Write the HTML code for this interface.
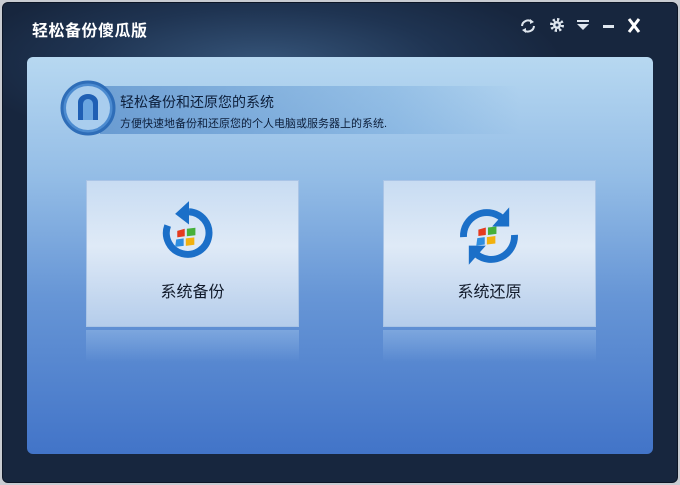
<!DOCTYPE html>
<html><head><meta charset="utf-8"><style>
*{margin:0;padding:0;box-sizing:border-box}
body{width:680px;height:485px;background:#c9ccd2;font-family:"Liberation Sans","Noto Sans CJK SC",sans-serif;overflow:hidden;position:relative}
.win{position:absolute;left:2px;top:2px;width:676px;height:481px;border-radius:6px;background:radial-gradient(ellipse 300px 90px at 260px 60px,#36557a 0%,#1f3452 60%,#17263e 100%);border:1px solid #0d1626}
.title{position:absolute;left:32px;top:17px;color:#fff;font-size:16px;font-weight:bold;letter-spacing:0.5px}
.panel{position:absolute;left:27px;top:57px;width:626px;height:397px;border-radius:6px;background:linear-gradient(#b7d8f1 0%,#94bde6 30%,#6796d6 60%,#4274c8 100%)}
.band{position:absolute;left:100px;top:86px;width:420px;height:48px;background:linear-gradient(90deg,rgba(60,120,190,.55),rgba(90,150,210,.3) 70%,rgba(150,200,240,0))}
.h1{position:absolute;left:120px;top:92px;font-size:14px;color:#0c1e3a}
.h2{position:absolute;left:120px;top:115px;font-size:11px;color:#0c1e3a}
.card{position:absolute;top:180px;width:213px;height:147px;border:1px solid #a9c4e6;background:linear-gradient(#c8dcf2,#dfeaf7 45%,#b5cdeb 100%)}
.card span{position:absolute;left:0;right:0;top:97px;text-align:center;font-size:16px;color:#111a2a}
.refl{position:absolute;top:330px;width:213px;height:32px;background:linear-gradient(rgba(160,195,235,.45),rgba(160,195,235,0))}
</style></head><body>
<div class="win"></div>
<div class="title">轻松备份傻瓜版</div>
<svg style="position:absolute;left:518px;top:15px" width="130" height="22" viewBox="0 0 130 22">
<g fill="none" stroke="#dfe6ee" stroke-width="2"><path d="M4 11a6 6 0 0 1 10-4"/><path d="M16 11a6 6 0 0 1-10 4"/></g>
<path d="M12 4l4 3-4 2z M8 18l-4-3 4-2z" fill="#dfe6ee"/>
<circle cx="39" cy="10" r="5.5" fill="none" stroke="#dfe6ee" stroke-width="3" stroke-dasharray="2.2 2.1"/>
<circle cx="39" cy="10" r="4" fill="#dfe6ee"/><circle cx="39" cy="10" r="1.5" fill="#223553"/>
<rect x="59" y="5" width="12" height="2" fill="#dfe6ee"/><path d="M59 9h12l-6 6z" fill="#dfe6ee"/>
<rect x="85" y="10" width="11" height="3" fill="#dfe6ee"/>
<path d="M111 4l10 13M121 4l-10 13" stroke="#fff" stroke-width="3"/>
</svg>
<div class="panel"></div>
<div class="band"></div>
<svg style="position:absolute;left:60px;top:80px" width="58" height="58">
<circle cx="28" cy="28" r="26" fill="#4c8bd0" stroke="#2e6db8" stroke-width="3"/>
<circle cx="28" cy="28" r="22" fill="#a9cdee"/>
<path d="M18 40V22a10 8 0 0 1 20 0v18z" fill="#1f5fb4"/>
<path d="M23 40V24a5 5 0 0 1 10 0v16z" fill="#6aa5e0"/>
</svg>
<div class="h1">轻松备份和还原您的系统</div>
<div class="h2">方便快速地备份和还原您的个人电脑或服务器上的系统.</div>
<div class="card" style="left:86px"><span>系统备份</span></div>
<div class="card" style="left:383px"><span>系统还原</span></div>
<div class="refl" style="left:86px"></div>
<div class="refl" style="left:383px"></div>
<svg style="position:absolute;left:158px;top:200px" width="62" height="64" viewBox="0 0 58 60">
<path d="M9 24a20 20 0 1 0 20-13" fill="none" stroke="#1b6fc8" stroke-width="6.5"/>
<path d="M29 1l-13 12 13 10z" fill="#1b6fc8"/>
<path d="M18 29l7-2v7l-7 1z" fill="#e53a1e"/><path d="M27 27l8-1v7l-8 1z" fill="#46b03a"/>
<path d="M17 37l7-1v7l-8 1z" fill="#2e8ee0"/><path d="M26 36l8-1v7l-8 1z" fill="#f2b10f"/>
</svg>
<svg style="position:absolute;left:455px;top:203px" width="68" height="66" viewBox="0 0 64 62">
<path d="M8 32a22 22 0 0 1 36-18" fill="none" stroke="#1b6fc8" stroke-width="6.5"/>
<path d="M51 4v18h-16z" fill="#1b6fc8"/>
<path d="M56 30a22 22 0 0 1-36 18" fill="none" stroke="#1b6fc8" stroke-width="6.5"/>
<path d="M13 58v-18h16z" fill="#1b6fc8"/>
<path d="M22 25l7-2v7l-7 1z" fill="#e53a1e"/><path d="M31 23l8-1v7l-8 1z" fill="#46b03a"/>
<path d="M21 33l7-1v7l-8 1z" fill="#2e8ee0"/><path d="M30 32l8-1v7l-8 1z" fill="#f2b10f"/>
</svg>
</body></html>
